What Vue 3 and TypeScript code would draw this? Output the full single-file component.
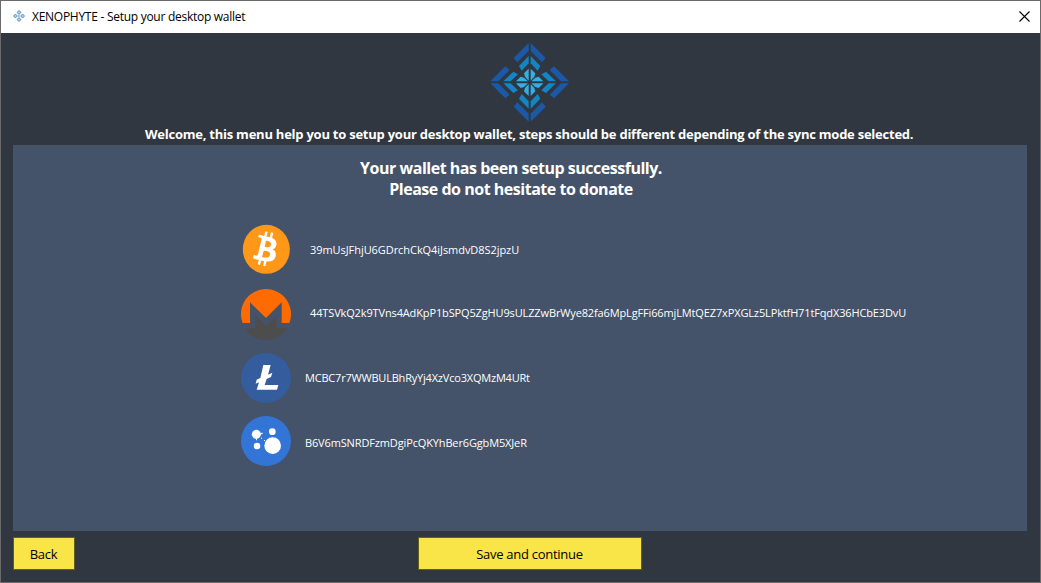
<script setup lang="ts">
interface Donation {
  coin: 'bitcoin' | 'monero' | 'litecoin' | 'xenophyte'
  address: string
}

const donations: Donation[] = [
  { coin: 'bitcoin', address: '39mUsJFhjU6GDrchCkQ4iJsmdvD8S2jpzU' },
  { coin: 'monero', address: '44TSVkQ2k9TVns4AdKpP1bSPQ5ZgHU9sULZZwBrWye82fa6MpLgFFi66mjLMtQEZ7xPXGLz5LPktfH71tFqdX36HCbE3DvU' },
  { coin: 'litecoin', address: 'MCBC7r7WWBULBhRyYj4XzVco3XQMzM4URt' },
  { coin: 'xenophyte', address: 'B6V6mSNRDFzmDgiPcQKYhBer6GgbM5XJeR' },
]

const quarterTurns: number[] = [0, 90, 180, 270]
</script>

<template>
  <div class="window">
    <header class="titlebar">
      <svg class="app-icon" viewBox="0 0 12 12">
        <g fill="#a9d0ec" stroke="#4b7fb5" stroke-width="0.8">
          <path v-for="a in quarterTurns" :key="a" :transform="`rotate(${a} 6 6)`" d="M6 .5L8 2.4 6 4.4 4 2.4z" />
        </g>
        <path d="M6 4.6V7.4M4.6 6H7.4" stroke="#6fb2dc" stroke-width="0.8" />
      </svg>
      <span class="title">XENOPHYTE - Setup your desktop wallet</span>
      <svg class="close" viewBox="0 0 11 11"><path d="M.5.5l10 10M10.5.5l-10 10" stroke="#000" stroke-width="1.1" /></svg>
    </header>

    <main class="body">
      <svg class="logo" viewBox="-119 -121 240 240">
        <g v-for="a in quarterTurns" :key="a" :transform="`rotate(${a})`">
          <g v-for="s in [1, -1]" :key="s" :transform="`scale(${s} 1)`">
            <path fill="#1b58a5" d="M-3-118V-94L-37-60L-48-73z" />
            <path fill="#1384c4" d="M-3-79V-57L-24-35L-32-49z" />
            <path fill="#35aee2" d="M-3-41L-17-27L-14-17L-3-5z" />
          </g>
        </g>
      </svg>
      <p class="welcome">Welcome, this menu help you to setup your desktop wallet, steps should be different depending of the sync mode selected.</p>

      <section class="panel">
        <h1 class="heading">Your wallet has been setup successfully.<br />Please do not hesitate to donate</h1>
        <ul class="donations">
          <li v-for="d in donations" :key="d.coin" class="row" :class="d.coin">
            <svg v-if="d.coin === 'bitcoin'" class="coin" viewBox="0 0 156 156">
              <ellipse cx="79" cy="79" rx="70.5" ry="73.5" fill="#ff9718" />
              <g transform="translate(-30 -24)" fill="#fff" fill-rule="evenodd">
                <path d="M87 59L114 65C133 69 142 77 139 90C138 97 134 101 128 103C136 107 139 114 137 123C134 138 121 142 99 138L68 130L72 120L80 122Q83 122 84 118L95 72Q95 69 91 68L84 66zM108 77L104 95C113 98 121 97 123 89C124 81 118 78 108 77zM101 107L96 126C107 129 118 129 120 119C122 110 112 108 101 107z" />
                <path d="M106 49L113 51 109 67 102 65zM123 52L130 54 126 70 119 68zM87 132L94 134 90 150 83 148zM103 136L110 138 106 154 99 152z" />
              </g>
            </svg>
            <svg v-else-if="d.coin === 'monero'" class="coin" viewBox="0 0 156 156">
              <path fill="#ff6b00" d="M8 105A75 75 0 1 1 148 105H125V43L78 90L30 43V105z" />
              <path fill="#4d4d4d" d="M14 120H46V83L78 113L109 83V120H142A75 75 0 0 1 14 120z" />
            </svg>
            <svg v-else-if="d.coin === 'litecoin'" class="coin" viewBox="0 0 156 156">
              <circle cx="78" cy="78" r="75" fill="#345d9d" />
              <path fill="#fff" d="M70 39H92L84 68L97 62L93 75L80 81L74 99H115L111 113H50L57 91L47 95L50 83L61 78z" />
            </svg>
            <svg v-else class="coin" viewBox="0 0 156 156">
              <circle cx="78" cy="78" r="75" fill="#3375d6" />
              <g fill="#fff">
                <circle cx="49" cy="58" r="13.5" />
                <circle cx="97" cy="50" r="10" />
                <circle cx="51" cy="93" r="10" />
                <circle cx="98" cy="92" r="25" />
                <path d="M60 54L68 53V56L61 59zM48 70H51V76H48zM63 68H66V71H63zM72 75H75V78H72z" />
              </g>
            </svg>
            <span class="address">{{ d.address }}</span>
          </li>
        </ul>
      </section>

      <footer class="actions">
        <button class="btn back">Back</button>
        <button class="btn save">Save and continue</button>
      </footer>
    </main>
  </div>
</template>

<style>
body {
  margin: 0;
  overflow: hidden;
}
</style>

<style scoped>
.window {
  box-sizing: border-box;
  width: 1041px;
  height: 583px;
  border: 1px solid #6b6b6c;
  background: #313740;
  font-family: "Open Sans", "Noto Sans", sans-serif;
  display: flex;
  flex-direction: column;
  white-space: nowrap;
}
.titlebar {
  box-sizing: border-box;
  height: 32px;
  flex: none;
  background: #fff;
  display: flex;
  align-items: center;
  padding: 0 10px 2px 12px;
}
.app-icon {
  width: 12px;
  height: 12px;
}
.title {
  margin: 2px 0 0 7px;
  font-size: 12px;
  line-height: 16px;
  letter-spacing: -0.27px;
  color: #000;
}
.close {
  width: 11px;
  height: 11px;
  margin-left: auto;
}
.body {
  flex: 1;
  display: flex;
  flex-direction: column;
  padding: 0 12px;
}
.logo {
  width: 80px;
  height: 80px;
  flex: none;
  margin: 9px 0 0 477px;
}
.welcome {
  margin: 2px 0 1px 132px;
  height: 20px;
  line-height: 20px;
  font-size: 13px;
  font-weight: 700;
  letter-spacing: -0.24px;
  color: #fff;
}
.panel {
  width: 1014px;
  height: 386px;
  flex: none;
  box-sizing: border-box;
  padding-top: 13px;
  background: #445369;
  color: #fff;
}
.heading {
  margin: 0;
  width: 996px;
  text-align: center;
  font-size: 16px;
  line-height: 21px;
  font-weight: 700;
  letter-spacing: -0.48px;
}
.donations {
  list-style: none;
  margin: 23px 0 0;
  padding: 0 0 0 227px;
}
.row {
  display: flex;
  align-items: center;
  height: 52px;
  margin-bottom: 12px;
}
.row.bitcoin {
  margin-bottom: 13px;
}
.row.litecoin {
  margin-bottom: 11px;
}
.coin {
  width: 52px;
  height: 52px;
  flex: none;
}
.address {
  margin-left: 13px;
  font-size: 11px;
  line-height: 16px;
}
.bitcoin .address {
  margin: 2px 0 0 18px;
  letter-spacing: -0.06px;
}
.monero .address {
  margin: 0 0 2px 18px;
  letter-spacing: -0.135px;
}
.litecoin .address {
  letter-spacing: -0.2px;
}
.xenophyte .address {
  margin-top: 4px;
  letter-spacing: -0.14px;
}
.actions {
  display: flex;
  margin-top: 6px;
}
.btn {
  box-sizing: border-box;
  height: 33px;
  padding: 1px 1px 0 0;
  border: 1px solid #655f17;
  background: #f9e547;
  color: #000;
  font-family: inherit;
  font-size: 13px;
  letter-spacing: -0.28px;
}
.back {
  width: 62px;
}
.save {
  width: 224px;
  margin-left: 343px;
}
</style>
